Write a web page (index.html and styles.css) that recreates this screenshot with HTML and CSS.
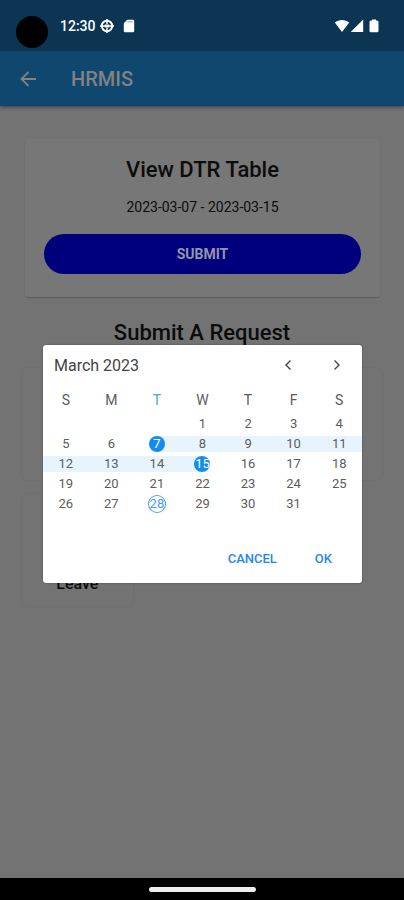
FILE: index.html
```html
<!DOCTYPE html>
<html lang="en">
<head>
<meta charset="utf-8">
<meta name="viewport" content="width=device-width, initial-scale=1">
<title>HRMIS</title>
<link rel="stylesheet" href="styles.css">
</head>
<body>
<header>
  <div class="status">
    <span class="camera"></span>
    <span class="time">12:30</span>
    <svg class="target" width="14" height="14" viewBox="0 0 14 14" fill="none" stroke="currentColor"><circle cx="7" cy="7" r="5.200" stroke-width="2"/><path d="M7 0v5M7 9v5M0 7h14" stroke-width="1.500"/><path d="M4.800 5.500h4.400v3H4.800z" fill="currentColor" stroke="none"/></svg>
    <svg class="sd" width="12" height="14" viewBox="0 0 12 14"><path d="M4.200.8H10a1.200 1.200 0 0 1 1.200 1.200v10A1.200 1.200 0 0 1 10 13.200H2A1.200 1.200 0 0 1 .8 12V4.200z" fill="currentColor"/><path d="M4.500 2.800h5" stroke="#0c3553" stroke-width=".8" opacity=".6"/></svg>
    <span class="signals">
      <svg width="16" height="14" viewBox="0 0 16 14" fill="currentColor"><path d="M.8 3.600C4.800.2 11.200.2 15.200 3.600L8 13z"/></svg>
      <svg width="14" height="14" viewBox="0 0 14 14" fill="currentColor"><path d="M13.200.5V13H.7z"/></svg>
      <svg class="battery" width="10" height="14" viewBox="0 0 10 14" fill="currentColor"><path d="M3 .5h4v1h1a1.500 1.500 0 0 1 1.500 1.500V12A1.300 1.300 0 0 1 8.200 13.300H1.800A1.300 1.300 0 0 1 .5 12V3A1.500 1.500 0 0 1 2 1.500h1z"/></svg>
    </span>
  </div>
  <div class="appbar">
    <button class="back" aria-label="Back"><svg width="16" height="16" viewBox="0 0 16 16" fill="none" stroke="currentColor" stroke-width="1.800"><path d="M16 8H2M8.500 1L1.500 8l7 7"/></svg></button>
    <h1>HRMIS</h1>
  </div>
</header>
<main>
  <section class="card">
    <h2>View DTR Table</h2>
    <p>2023-03-07 - 2023-03-15</p>
    <button class="submit">SUBMIT</button>
  </section>
  <h2>Submit A Request</h2>
  <div class="requests">
    <div class="tile wide"></div>
    <div class="tile leave">Leave</div>
  </div>
</main>
<footer><span></span></footer>
<div class="dialog" role="dialog" aria-label="Select dates">
  <div class="month">
    <span>March 2023</span>
    <button aria-label="Previous month"><svg width="8" height="12" viewBox="0 0 8 12" fill="none" stroke="currentColor" stroke-width="1.400"><path d="M6.500 1.500L2 6l4.500 4.500"/></svg></button>
    <button aria-label="Next month"><svg width="8" height="12" viewBox="0 0 8 12" fill="none" stroke="currentColor" stroke-width="1.400"><path d="M1.500 1.500L6 6l-4.500 4.500"/></svg></button>
  </div>
  <table>
    <thead><tr><th>S</th><th>M</th><th class="current">T</th><th>W</th><th>T</th><th>F</th><th>S</th></tr></thead>
    <tbody>
      <tr><td></td><td></td><td></td><td><span>1</span></td><td><span>2</span></td><td><span>3</span></td><td><span>4</span></td></tr>
      <tr><td><span>5</span></td><td><span>6</span></td><td class="first"><span class="picked">7</span></td><td class="range"><span>8</span></td><td class="range"><span>9</span></td><td class="range"><span>10</span></td><td class="range"><span>11</span></td></tr>
      <tr><td class="range"><span>12</span></td><td class="range"><span>13</span></td><td class="range"><span>14</span></td><td class="last"><span class="picked">15</span></td><td><span>16</span></td><td><span>17</span></td><td><span>18</span></td></tr>
      <tr><td><span>19</span></td><td><span>20</span></td><td><span>21</span></td><td><span>22</span></td><td><span>23</span></td><td><span>24</span></td><td><span>25</span></td></tr>
      <tr><td><span>26</span></td><td><span>27</span></td><td><span class="today">28</span></td><td><span>29</span></td><td><span>30</span></td><td><span>31</span></td><td></td></tr>
    </tbody>
  </table>
  <div class="actions"><button>CANCEL</button><button>OK</button></div>
</div>
</body>
</html>
```
FILE: styles.css
```css
* { box-sizing: border-box; }
body {
  margin: 0;
  min-height: 100vh;
  display: flex;
  flex-direction: column;
  background: #737373;
  color: #0c0c0c;
  font-family: Roboto, sans-serif;
}
button {
  margin: 0;
  padding: 0;
  border: 0;
  background: none;
  font: inherit;
  color: inherit;
}
svg { display: block; }
h1, h2, p { margin: 0; }
header { box-shadow: 0 1px 4px rgba(0, 0, 0, .5); }
.status {
  display: flex;
  align-items: center;
  height: 51px;
  padding: 0 25px 0 16px;
  background: #0c3553;
  color: #fff;
}
.camera {
  width: 32px;
  height: 32px;
  margin: 12px 12px 0 0;
  border-radius: 50%;
  background: #000;
}
.time {
  font-size: 14px;
  font-weight: 500;
}
.target { margin-left: 4px; }
.sd { margin-left: 9px; }
.signals {
  display: flex;
  margin-left: auto;
}
.battery { margin-left: 5px; }
.appbar {
  display: flex;
  align-items: center;
  gap: 35px;
  height: 55px;
  padding: 0 20px;
  background: #10476f;
  color: #808284;
}
h1 {
  font-size: 20px;
  font-weight: 500;
}
main {
  flex: 1;
  padding: 33px 22px 0;
}
h2 {
  font-size: 22px;
  font-weight: 500;
  line-height: 24px;
  text-align: center;
}
.card {
  margin: 0 2px 24px 3px;
  padding: 19px 19px 23px;
  border-radius: 3px;
  background: #777;
  box-shadow: 0 1px 1px rgba(0, 0, 0, .2);
  text-align: center;
}
.card p {
  margin: 17px 0 18px;
  font-size: 14px;
  line-height: 17px;
}
.submit {
  display: block;
  width: 100%;
  height: 40px;
  border-radius: 20px;
  background: #00007c;
  color: #9294a8;
  font-size: 14px;
  font-weight: 700;
}
.requests {
  display: grid;
  grid-template-columns: repeat(3, 1fr);
  gap: 14px;
  margin-top: 23px;
}
.tile {
  height: 112px;
  border-radius: 6px;
  background: #737373;
  box-shadow: 0 0 3px rgba(0, 0, 0, .08);
}
.wide { grid-column: 1 / -1; }
.leave {
  display: flex;
  align-items: end;
  justify-content: center;
  padding-bottom: 13px;
  font-size: 16px;
  font-weight: 500;
}
footer {
  display: flex;
  align-items: center;
  justify-content: center;
  height: 22px;
  background: #000;
}
footer span {
  width: 107px;
  height: 5px;
  border-radius: 3px;
  background: #eee;
}
.dialog {
  position: absolute;
  top: 345px;
  left: 43px;
  right: 42px;
  padding-bottom: 12px;
  border-radius: 3px;
  background: #fff;
  color: #5c5c5c;
  box-shadow: 0 0 2px rgba(0, 0, 0, .4);
}
.month {
  display: flex;
  align-items: center;
  height: 40px;
  padding: 0 13px 0 11px;
  color: #444;
  font-size: 16px;
}
.month span { flex: 1; }
.month button {
  display: grid;
  place-items: center;
  width: 24px;
  height: 24px;
  margin-left: 25px;
}
table {
  width: 100%;
  border-collapse: collapse;
  table-layout: fixed;
  text-align: center;
}
th {
  height: 29px;
  padding: 0;
  font-size: 14px;
  font-weight: 400;
}
th.current { color: #4a9cf8; }
td {
  height: 20px;
  padding: 2px 0;
  font-size: 13px;
  line-height: 16px;
}
td span { display: block; }
.range { background: #e8f4fd content-box; }
.first { background: linear-gradient(to right, transparent 50%, #e8f4fd 50%) content-box; }
.last { background: linear-gradient(to right, #e8f4fd 50%, transparent 50%) content-box; }
td .picked, td .today {
  display: flex;
  justify-content: center;
  width: 16px;
  margin: 0 auto;
  border-radius: 50%;
}
td .picked {
  background: #148cf0;
  color: #fff;
}
td .today {
  color: #4a9cf8;
  box-shadow: 0 0 0 1px #4a9cf8;
}
.actions {
  display: flex;
  justify-content: end;
  gap: 38px;
  margin-top: 33px;
  padding-right: 30px;
  color: #1e88f0;
  font-size: 13px;
  font-weight: 500;
  line-height: 24px;
}
```
